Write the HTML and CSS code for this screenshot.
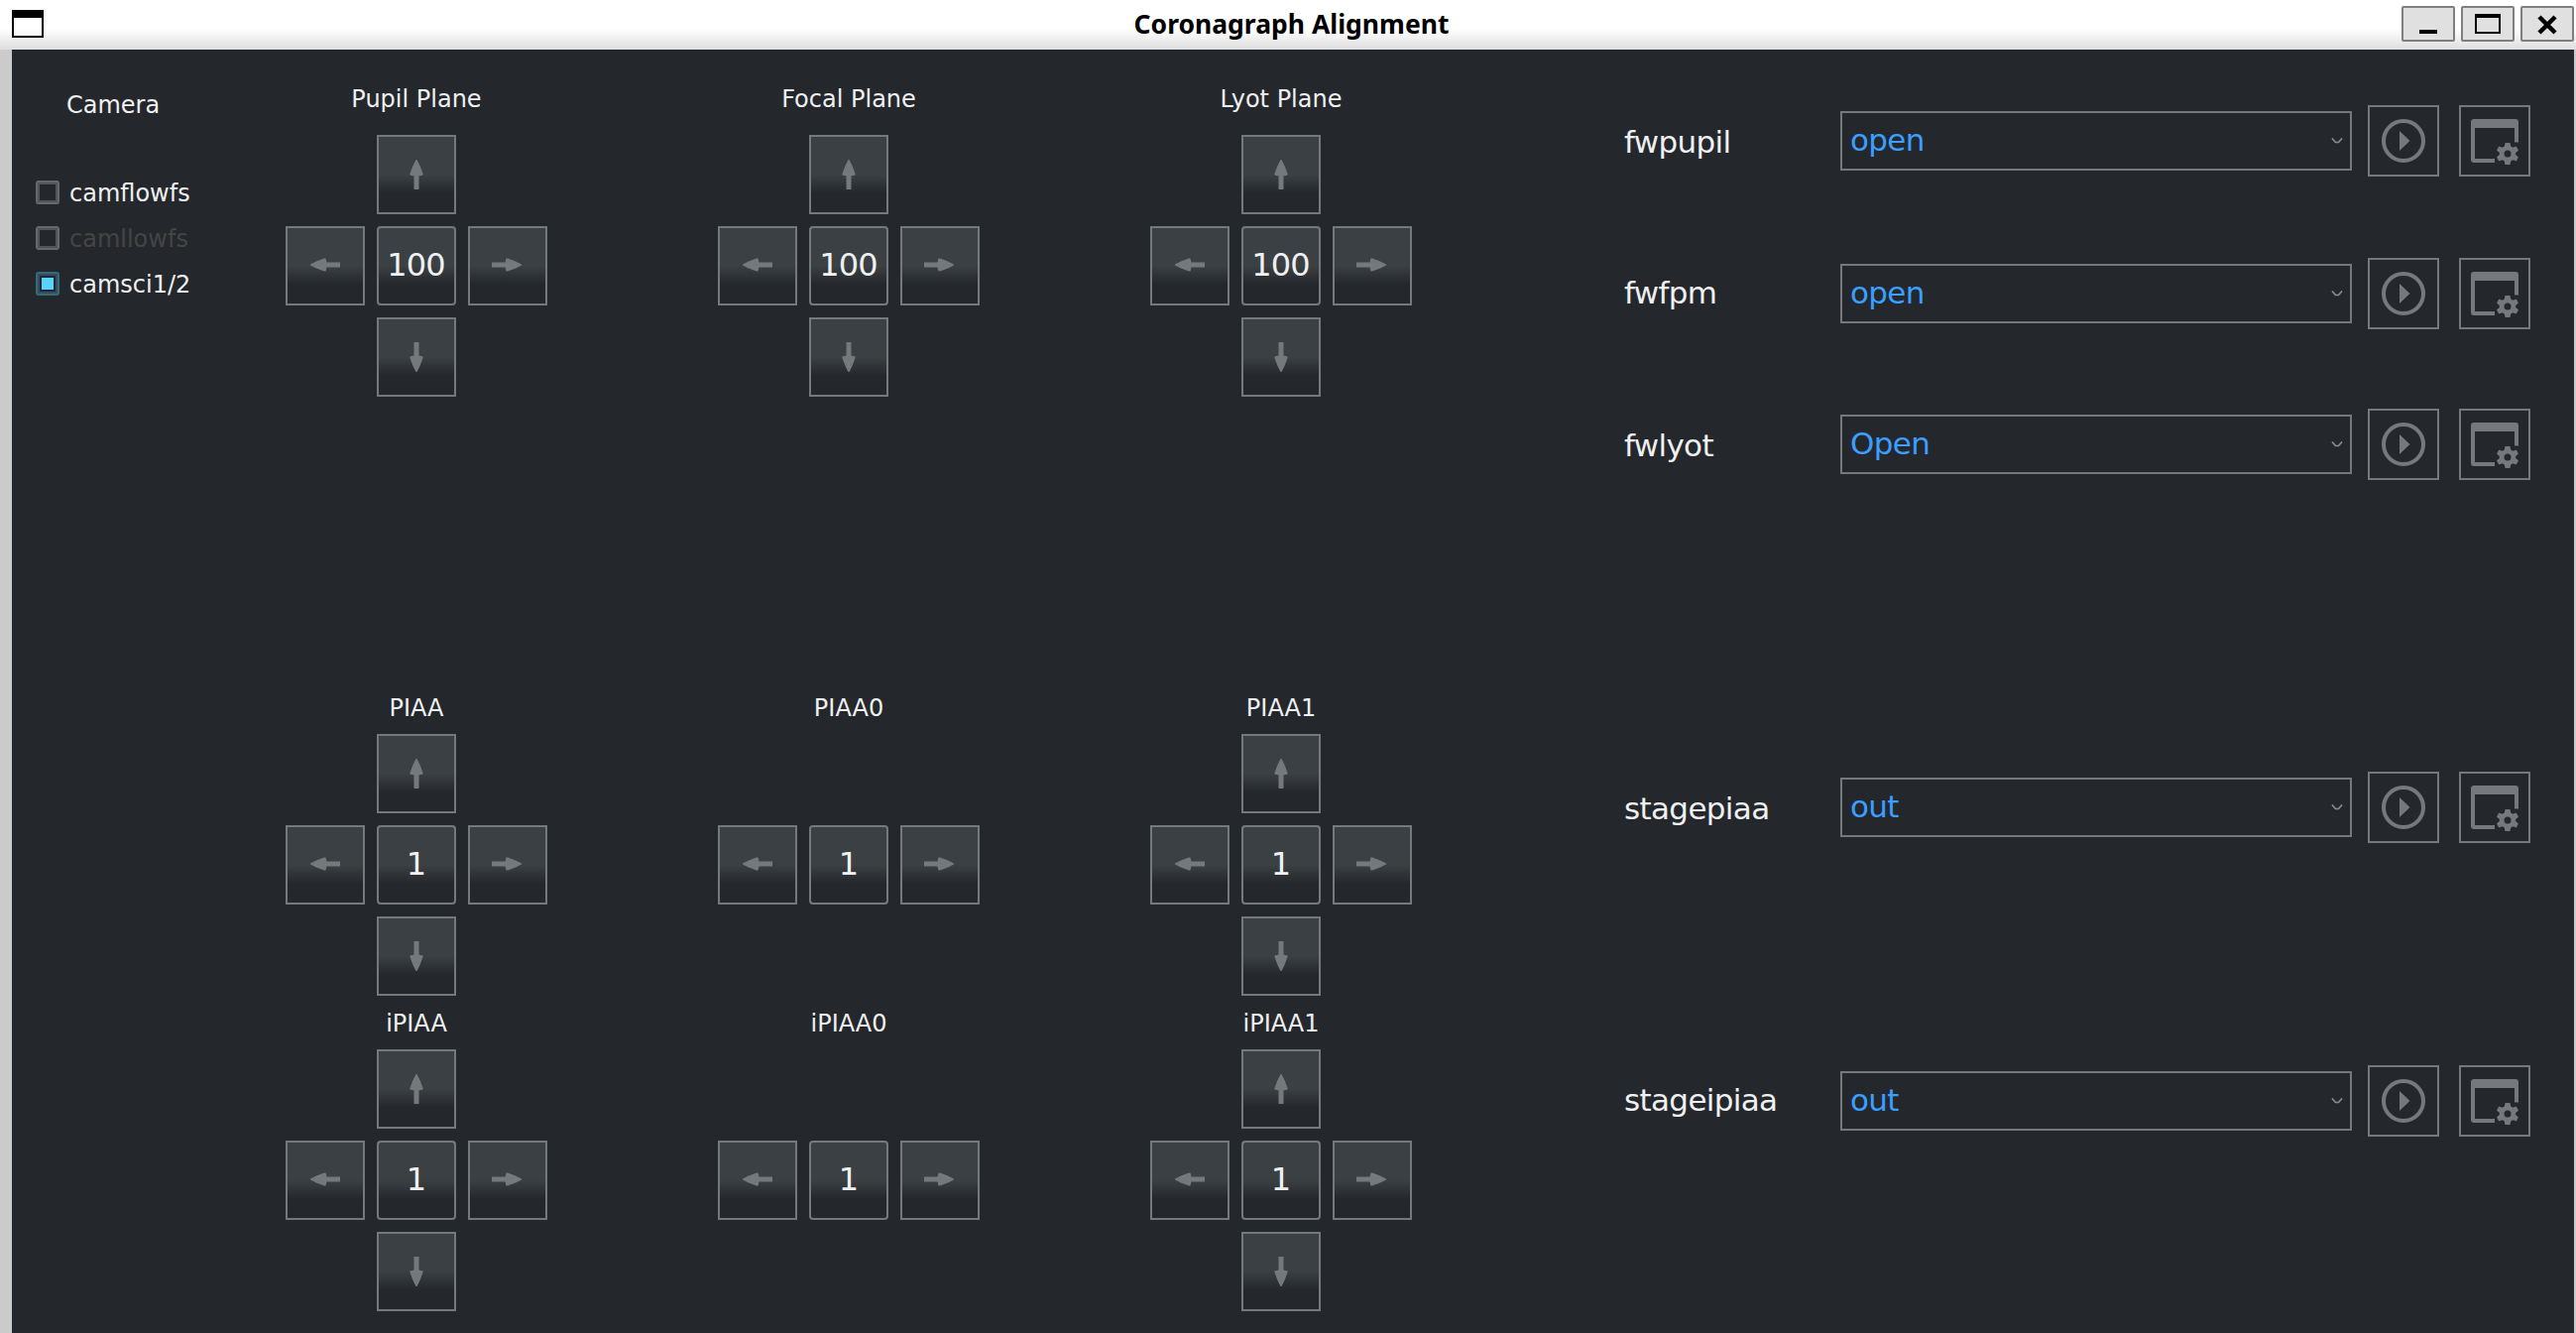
FILE: index.html
```html
<!DOCTYPE html>
<html lang="en">
<head>
<meta charset="utf-8">
<title>Coronagraph Alignment</title>
<link rel="stylesheet" href="styles.css">
</head>
<body>
<svg class="defs" width="0" height="0" aria-hidden="true">
  <symbol id="arrow" viewBox="0 0 30 30"><path d="M14.500 0 H15.500 L18.500 6 L21.500 14 V15.500 L17.500 16.500 V30 H12.500 V16.500 L8.500 15.500 V14 L11.500 6 Z"/></symbol>
  <symbol id="play" viewBox="0 0 68 68"><circle cx="34" cy="34" r="20" fill="none" stroke="currentColor" stroke-width="4"/><path d="M30 24 L40.500 34 L30 44 Z"/></symbol>
  <symbol id="config" viewBox="0 0 68 68">
    <path d="M10 15 Q10 12 13 12 H55 Q58 12 58 15 V35.500 H54 V21 H14 V52 H34 V56 H13 Q10 56 10 53 Z"/>
    <path fill-rule="evenodd" d="M44.500 36 H49.500 L50.200 39.600 L52.300 40.800 L55.700 39.500 L58 43.600 L55.200 46 V48 L58 50.400 L55.700 54.500 L52.300 53.200 L50.200 54.400 L49.500 58 H44.500 L43.800 54.400 L41.700 53.200 L38.300 54.500 L36 50.400 L38.800 48 V46 L36 43.600 L38.300 39.500 L41.700 40.800 L43.800 39.600 Z M47 43.500 A3.500 3.500 0 1 0 47 50.500 A3.500 3.500 0 1 0 47 43.500 Z"/>
  </symbol>
  <symbol id="chevron" viewBox="0 0 12 6"><path d="M1 0.500 L4.500 4.500 H7.500 L11 0.500" fill="none" stroke="currentColor" stroke-width="1.700"/></symbol>
</svg>

<header class="titlebar">
  <svg class="app-icon" viewBox="0 0 32 28"><path d="M0 0H32V28H0Z M2 8V26H30V8Z" fill-rule="evenodd"/></svg>
  <h1 class="title">Coronagraph Alignment</h1>
  <div class="window-buttons">
    <span class="wbtn"><svg viewBox="0 0 50 32"><path d="M16 22H34V26H16Z"/></svg></span>
    <span class="wbtn"><svg viewBox="0 0 50 32"><path d="M12 6H38V26H12Z M14 10V24H36V10Z" fill-rule="evenodd"/></svg></span>
    <span class="wbtn"><svg viewBox="0 0 50 32"><path d="M17 9L33 25M33 9L17 25" stroke="#000" stroke-width="4.500"/></svg></span>
  </div>
</header>

<main class="window">
  <section class="cameras">
    <h2 class="camera-title">Camera</h2>
    <label class="check"><span class="box"></span><span class="text">camflowfs</span></label>
    <label class="check disabled"><span class="box"></span><span class="text">camllowfs</span></label>
    <label class="check checked"><span class="box"></span><span class="text">camsci1/2</span></label>
  </section>

  <section class="pads">
    <div class="pad-row planes">
      <div class="pad"><h3>Pupil Plane</h3><div class="cross"><button class="up"><svg><use href="#arrow"/></svg></button><button class="left"><svg><use href="#arrow"/></svg></button><button class="step">100</button><button class="right"><svg><use href="#arrow"/></svg></button><button class="down"><svg><use href="#arrow"/></svg></button></div></div>
      <div class="pad"><h3>Focal Plane</h3><div class="cross"><button class="up"><svg><use href="#arrow"/></svg></button><button class="left"><svg><use href="#arrow"/></svg></button><button class="step">100</button><button class="right"><svg><use href="#arrow"/></svg></button><button class="down"><svg><use href="#arrow"/></svg></button></div></div>
      <div class="pad"><h3>Lyot Plane</h3><div class="cross"><button class="up"><svg><use href="#arrow"/></svg></button><button class="left"><svg><use href="#arrow"/></svg></button><button class="step">100</button><button class="right"><svg><use href="#arrow"/></svg></button><button class="down"><svg><use href="#arrow"/></svg></button></div></div>
    </div>
    <div class="pad-row piaa">
      <div class="pad"><h3>PIAA</h3><div class="cross"><button class="up"><svg><use href="#arrow"/></svg></button><button class="left"><svg><use href="#arrow"/></svg></button><button class="step">1</button><button class="right"><svg><use href="#arrow"/></svg></button><button class="down"><svg><use href="#arrow"/></svg></button></div></div>
      <div class="pad"><h3>PIAA0</h3><div class="cross"><button class="left"><svg><use href="#arrow"/></svg></button><button class="step">1</button><button class="right"><svg><use href="#arrow"/></svg></button></div></div>
      <div class="pad"><h3>PIAA1</h3><div class="cross"><button class="up"><svg><use href="#arrow"/></svg></button><button class="left"><svg><use href="#arrow"/></svg></button><button class="step">1</button><button class="right"><svg><use href="#arrow"/></svg></button><button class="down"><svg><use href="#arrow"/></svg></button></div></div>
    </div>
    <div class="pad-row ipiaa">
      <div class="pad"><h3>iPIAA</h3><div class="cross"><button class="up"><svg><use href="#arrow"/></svg></button><button class="left"><svg><use href="#arrow"/></svg></button><button class="step">1</button><button class="right"><svg><use href="#arrow"/></svg></button><button class="down"><svg><use href="#arrow"/></svg></button></div></div>
      <div class="pad"><h3>iPIAA0</h3><div class="cross"><button class="left"><svg><use href="#arrow"/></svg></button><button class="step">1</button><button class="right"><svg><use href="#arrow"/></svg></button></div></div>
      <div class="pad"><h3>iPIAA1</h3><div class="cross"><button class="up"><svg><use href="#arrow"/></svg></button><button class="left"><svg><use href="#arrow"/></svg></button><button class="step">1</button><button class="right"><svg><use href="#arrow"/></svg></button><button class="down"><svg><use href="#arrow"/></svg></button></div></div>
    </div>
  </section>

  <section class="stages">
    <div class="stage pupil"><span class="name">fwpupil</span><div class="combo">open<svg><use href="#chevron"/></svg></div><button class="icon"><svg><use href="#play"/></svg></button><button class="icon"><svg><use href="#config"/></svg></button></div>
    <div class="stage fpm"><span class="name">fwfpm</span><div class="combo">open<svg><use href="#chevron"/></svg></div><button class="icon"><svg><use href="#play"/></svg></button><button class="icon"><svg><use href="#config"/></svg></button></div>
    <div class="stage lyot"><span class="name">fwlyot</span><div class="combo">Open<svg><use href="#chevron"/></svg></div><button class="icon"><svg><use href="#play"/></svg></button><button class="icon"><svg><use href="#config"/></svg></button></div>
    <div class="stage spiaa"><span class="name">stagepiaa</span><div class="combo">out<svg><use href="#chevron"/></svg></div><button class="icon"><svg><use href="#play"/></svg></button><button class="icon"><svg><use href="#config"/></svg></button></div>
    <div class="stage sipiaa"><span class="name">stageipiaa</span><div class="combo">out<svg><use href="#chevron"/></svg></div><button class="icon"><svg><use href="#play"/></svg></button><button class="icon"><svg><use href="#config"/></svg></button></div>
  </section>
</main>
</body>
</html>
```
FILE: styles.css
```css
* { box-sizing: border-box; }
html, body { margin: 0; height: 1344px; overflow: hidden; }
body { width: 2598px; font-family: "DejaVu Sans", sans-serif; background: #24272b; }
h1, h2, h3 { margin: 0; font-weight: normal; }
button { margin: 0; padding: 0; border: 2px solid #76797c; border-radius: 0; font: inherit; color: #eff0f1; background: none; }
svg { display: block; fill: currentColor; }
.defs { position: absolute; }

.titlebar { height: 50px; padding: 0 2px 0 12px; display: grid; grid-template-columns: 174px 1fr 174px; background: linear-gradient(#fff 0 29px, #dedede 50px); color: #000; }
.app-icon { width: 32px; height: 28px; margin-top: 10px; }
.title { text-align: center; font: bold 26.5px/48px "Noto Sans", sans-serif; padding-right: 3px; }
.window-buttons { display: flex; gap: 6px; padding-top: 6px; justify-content: flex-end; }
.wbtn { width: 54px; height: 36px; border: 2px solid #7f7f7f; border-radius: 2px; background: #e0e0e0; }
.wbtn svg { width: 50px; height: 32px; }

.window { height: 1294px; border-left: 12px solid #cbcbcb; border-right: 2px solid #cbcbcb; background: #24272b; color: #eff0f1; display: grid; grid-template-columns: 276px 1350px 1fr; font-size: 24px; }

.cameras { padding: 42px 0 0 24px; }
.camera-title { font-size: 24px; line-height: 28px; margin: 0 0 60px 31px; }
.check { display: flex; align-items: center; gap: 10px; height: 28px; margin-bottom: 18px; }
.check .text { padding-top: 2px; }
.box { width: 24px; height: 24px; border: 2px solid #66696c; border-radius: 3px; box-shadow: inset 0 0 0 2px #525558; }
.disabled { color: #454545; }
.checked .box { border-color: #38687b; box-shadow: inset 0 0 0 2px #2f5060; padding: 4px; }
.checked .box::before { content: ""; display: block; width: 12px; height: 12px; background: #58d3ff; }

.pad-row { display: flex; gap: 172px; }
.planes { padding-top: 36px; height: 603px; }
.pad { width: 264px; }
.pad h3 { font-size: 24px; line-height: 28px; text-align: center; margin-bottom: 22px; }
.piaa { padding-top: 47px; height: 364px; }
.piaa .pad h3, .ipiaa .pad h3 { margin-bottom: 12px; }
.ipiaa { padding-top: 1px; }
.cross { display: grid; grid-template: repeat(3, 80px) / repeat(3, 80px); gap: 12px; grid-template-areas: ". up ." "left step right" ". down ."; }
.cross button { display: flex; align-items: center; justify-content: center; background: linear-gradient(#3b4045 0, #3b4043 50%, #24272b 75%); }
.cross svg { width: 30px; height: 30px; color: #76797c; }
.up { grid-area: up; }
.down { grid-area: down; }
.left { grid-area: left; }
.right { grid-area: right; }
.cross .step { grid-area: step; font-size: 32px; letter-spacing: -0.8px; border-radius: 4px; padding: 0 1px 3px 0; }
.down svg { transform: rotate(180deg); }
.left svg { transform: rotate(-90deg); }
.right svg { transform: rotate(90deg); }
.cross .left, .cross .right { padding-bottom: 2px; }
.cross .right { padding-right: 2px; }

.stages { padding-top: 56px; font-size: 31px; letter-spacing: -0.65px; }
.stage { display: grid; grid-template-columns: 218px 516px 72px 72px; align-items: center; height: 72px; }
.stage .icon { width: 72px; height: 72px; margin-left: 16px; color: #76797c; }
.stage .icon + .icon { margin-left: 36px; }
.icon svg { width: 68px; height: 68px; }
.pupil .name, .lyot .name, .spiaa .name { padding-top: 1px; }
.fpm .name, .sipiaa .name { padding-bottom: 2px; }
.fpm { margin-top: 82px; }
.lyot { margin-top: 80px; }
.spiaa { margin-top: 294px; }
.sipiaa { margin-top: 224px; }
.combo { height: 60px; border: 2px solid #76797c; display: flex; align-items: center; justify-content: space-between; padding: 0 7px 2px 8px; color: #3a9fff; }
.combo svg { width: 12px; height: 6px; margin-top: 2px; color: #8a8d90; }
```
